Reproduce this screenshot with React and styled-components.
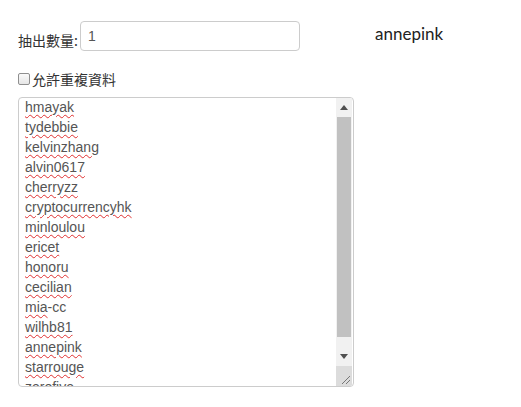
import React from 'react';
import styled, { createGlobalStyle } from 'styled-components';

const GlobalStyle = createGlobalStyle`
  body {
    margin: 0;
    background: #fff;
    font-family: "Liberation Sans", Arial, sans-serif;
  }
`;

const names = [
  ['hmayak'],
  ['tydebbie'],
  ['kelvinzhang'],
  ['alvin0617'],
  ['cherryzz'],
  ['cryptocurrencyhk'],
  ['minloulou'],
  ['ericet'],
  ['honoru'],
  ['cecilian'],
  ['mia', '-cc'],
  ['wilhb81'],
  ['annepink'],
  ['starrouge'],
  ['zerofive'],
];

export default function App() {
  return (
    <>
      <GlobalStyle />
      <Page>
        <Form>
          <CountRow>
            <Label>抽出數量:</Label>
            <NumberInput defaultValue="1" />
          </CountRow>
          <CheckRow>
            <Check />
            <CheckText>允許重複資料</CheckText>
          </CheckRow>
          <ListBox>
            <Lines>
              {names.map(([word, rest]) => (
                <Line key={word}>
                  <Misspelled>{word}</Misspelled>
                  {rest}
                </Line>
              ))}
            </Lines>
            <ScrollBar>
              <Arrow>
                <svg width="8" height="5" viewBox="0 0 8 5"><path d="M0 5 L4 0 L8 5 Z" fill="#505050" /></svg>
              </Arrow>
              <Track>
                <Thumb />
              </Track>
              <Arrow>
                <svg width="8" height="5" viewBox="0 0 8 5"><path d="M0 0 L4 5 L8 0 Z" fill="#505050" /></svg>
              </Arrow>
              <Grip>
                <svg width="10" height="10" viewBox="0 0 10 10">
                  <path d="M2 10 L10 2 M6 10 L10 6" stroke="#777" strokeWidth="1" />
                </svg>
              </Grip>
            </ScrollBar>
          </ListBox>
        </Form>
        <Winner>annepink</Winner>
      </Page>
    </>
  );
}

const Page = styled.div`
  display: flex;
  align-items: flex-start;
  padding: 21px 0 0 18px;
`;

const Form = styled.div`
  display: flex;
  flex-direction: column;
  width: 336px;
`;

const CountRow = styled.div`
  display: flex;
  align-items: center;
  gap: 2px;
`;

const Label = styled.span`
  font-family: "Noto Sans CJK TC", sans-serif;
  font-size: 14px;
  color: #333;
  margin-top: 7px;
`;

const NumberInput = styled.input`
  box-sizing: border-box;
  width: 220px;
  height: 30px;
  border: 1px solid #ccc;
  border-radius: 4px;
  padding: 0 7px;
  font-family: "Liberation Sans", Arial, sans-serif;
  font-size: 14px;
  color: #555;
  outline: none;
`;

const CheckRow = styled.label`
  display: flex;
  align-items: center;
  gap: 2px;
  margin-top: 20px;
  height: 16px;
`;

const Check = styled.span`
  box-sizing: border-box;
  width: 12px;
  height: 12px;
  border: 1px solid #8f8f8f;
  border-radius: 2px;
  background: linear-gradient(#fafafa, #e6e6e6);
`;

const CheckText = styled.span`
  font-family: "Noto Sans CJK TC", sans-serif;
  font-size: 14px;
  color: #333;
`;

const ListBox = styled.div`
  box-sizing: border-box;
  display: flex;
  margin-top: 10px;
  width: 336px;
  height: 290px;
  border: 1px solid #ccc;
  border-radius: 4px;
  overflow: hidden;
`;

const Lines = styled.div`
  flex: 1;
  overflow: hidden;
  padding: 0 0 0 6px;
  margin-top: -1px;
`;

const Line = styled.div`
  height: 20px;
  line-height: 20px;
  font-size: 14px;
  color: #555;
  white-space: nowrap;
`;

const Misspelled = styled.span`
  text-decoration: underline wavy #e03030;
  text-decoration-thickness: 1px;
  text-underline-offset: 2px;
`;

const ScrollBar = styled.div`
  width: 16px;
  margin-right: 1px;
  display: flex;
  flex-direction: column;
  background: #f1f1f1;
`;

const Arrow = styled.div`
  height: 19px;
  display: flex;
  align-items: center;
  justify-content: center;
`;

const Track = styled.div`
  flex: 1;
  display: flex;
  padding: 0 1px 10px;
`;

const Thumb = styled.div`
  flex: 1;
  background: #c1c1c1;
`;

const Grip = styled.div`
  height: 18px;
  display: flex;
  align-items: flex-end;
  justify-content: flex-end;
  background: #dcdcdc;
  padding: 0 2px 2px 0;
`;

const Winner = styled.div`
  margin: 2px 0 0 21px;
  font-family: Lato, sans-serif;
  font-size: 17px;
  color: #222;
`;
